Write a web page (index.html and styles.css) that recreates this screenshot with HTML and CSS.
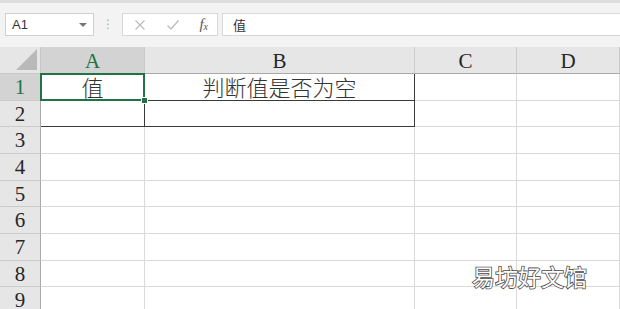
FILE: index.html
```html
<!DOCTYPE html>
<html lang="zh-CN">
<head>
  <meta charset="UTF-8">
  <title>判断值是否为空</title>
  <link rel="stylesheet" href="styles.css">
</head>
<body>
  <div class="excel">
    <div class="toolbar">
      <div class="name-box">
        <span>A1</span>
        <span class="caret"></span>
      </div>
      <div class="grip">⋮</div>
      <div class="fx-buttons">
        <svg class="fx-icon" viewBox="0 0 12 12" width="12" height="12">
          <path d="M1.5 1.5l9 9M10.5 1.5l-9 9" stroke="#bdbdbd" stroke-width="1.2" fill="none"/>
        </svg>
        <svg class="fx-icon" viewBox="0 0 14 12" width="14" height="12">
          <path d="M1.5 6.5l3.5 3.5 7.5-8.5" stroke="#bdbdbd" stroke-width="1.4" fill="none"/>
        </svg>
        <span class="fx-text">f<sub>x</sub></span>
      </div>
      <div class="formula-input">值</div>
    </div>

    <div class="sheet">
      <div class="corner"><span class="corner-tri"></span></div>
      <div class="col-head active">A</div>
      <div class="col-head">B</div>
      <div class="col-head">C</div>
      <div class="col-head">D</div>

      <div class="row-head active">1</div>
      <div class="cell b-right b-bottom selected">值</div>
      <div class="cell b-right b-bottom">判断值是否为空</div>
      <div class="cell"></div>
      <div class="cell"></div>

      <div class="row-head">2</div>
      <div class="cell b-right b-bottom"></div>
      <div class="cell b-right b-bottom"></div>
      <div class="cell"></div>
      <div class="cell"></div>

      <div class="row-head">3</div>
      <div class="cell"></div><div class="cell"></div><div class="cell"></div><div class="cell"></div>
      <div class="row-head">4</div>
      <div class="cell"></div><div class="cell"></div><div class="cell"></div><div class="cell"></div>
      <div class="row-head">5</div>
      <div class="cell"></div><div class="cell"></div><div class="cell"></div><div class="cell"></div>
      <div class="row-head">6</div>
      <div class="cell"></div><div class="cell"></div><div class="cell"></div><div class="cell"></div>
      <div class="row-head">7</div>
      <div class="cell"></div><div class="cell"></div><div class="cell"></div><div class="cell"></div>
      <div class="row-head">8</div>
      <div class="cell"></div><div class="cell"></div><div class="cell"></div><div class="cell"></div>
      <div class="row-head">9</div>
      <div class="cell"></div><div class="cell"></div><div class="cell"></div><div class="cell"></div>
    </div>

    <div class="watermark">易坊好文馆</div>
  </div>
</body>
</html>
```

FILE: styles.css
```css
body, html {
  margin: 0;
  padding: 0;
  width: 100%;
  height: 100%;
  overflow: hidden;
  background-color: #ffffff;
}

.excel {
  position: relative;
  width: 620px;
  height: 309px;
  overflow: hidden;
  font-family: "Liberation Serif", "Noto Sans CJK SC", serif;
}

/* formula bar */
.toolbar {
  height: 47px;
  box-sizing: border-box;
  background-color: #f3f3f3;
  border-top: 3px solid #dedede;
  display: flex;
  align-items: flex-start;
  padding: 10px 0 0 5px;
}

.name-box {
  width: 89px;
  height: 23px;
  box-sizing: border-box;
  background: #ffffff;
  border: 1px solid #d0d0d0;
  display: flex;
  align-items: center;
  justify-content: space-between;
  padding: 0 6px 0 6px;
  font-family: "Liberation Sans", Arial, sans-serif;
  font-size: 13px;
  color: #333;
}

.caret {
  width: 0;
  height: 0;
  border-left: 4px solid transparent;
  border-right: 4px solid transparent;
  border-top: 4px solid #777;
}

.grip {
  width: 28px;
  text-align: center;
  color: #aaa;
  font-family: "DejaVu Sans", sans-serif;
  font-size: 12px;
  line-height: 23px;
}

.fx-buttons {
  width: 96px;
  height: 23px;
  box-sizing: border-box;
  background: #ffffff;
  border: 1px solid #d8d8d8;
  display: flex;
  align-items: center;
  justify-content: space-between;
  padding: 0 9px 0 11px;
}

.fx-text {
  font-family: "Liberation Serif", serif;
  font-style: italic;
  font-size: 15px;
  color: #555;
  line-height: 1;
}

.fx-text sub {
  font-size: 10px;
  vertical-align: -1px;
}

.formula-input {
  flex: 1;
  height: 23px;
  box-sizing: border-box;
  margin-left: 4px;
  background: #ffffff;
  border: 1px solid #d8d8d8;
  border-right: none;
  padding-left: 10px;
  font-family: "Noto Sans CJK SC", sans-serif;
  font-size: 13px;
  line-height: 21px;
  color: #333;
}

/* grid */
.sheet {
  display: grid;
  grid-template-columns: 41px 104px 270px 102px 103px;
  grid-template-rows: 27px repeat(9, 26.667px);
}

.corner, .col-head, .row-head, .cell {
  box-sizing: border-box;
}

.corner {
  position: relative;
  background: #e6e6e6;
  border-right: 1px solid #c8c8c8;
  border-bottom: 1px solid #c8c8c8;
}

.corner-tri {
  position: absolute;
  right: 3px;
  bottom: 3px;
  width: 0;
  height: 0;
  border-left: 21px solid transparent;
  border-bottom: 21px solid #b9b9b9;
}

.col-head {
  background: #e6e6e6;
  border-right: 1px solid #cbcbcb;
  border-bottom: 1px solid #a9a9a9;
  padding-top: 2px;
  text-align: center;
  font-size: 21px;
  line-height: 24px;
  color: #262626;
}

.row-head {
  background: #e6e6e6;
  border-right: 1px solid #a9a9a9;
  border-bottom: 1px solid #cbcbcb;
  text-align: center;
  font-size: 21px;
  line-height: 26px;
  color: #262626;
}

.col-head.active, .row-head.active {
  background: #d3d3d3;
  color: #217346;
}

.cell {
  border-right: 1px solid #dadada;
  border-bottom: 1px solid #dadada;
  text-align: center;
  font-family: "Noto Sans CJK SC", sans-serif;
  font-weight: 300;
  font-size: 22px;
  line-height: 25px;
  color: #333;
}

.cell.b-right {
  border-right-color: #3a3a3a;
}

.cell.b-bottom {
  border-bottom-color: #3a3a3a;
}

.cell.selected {
  position: relative;
}

.cell.selected::after {
  content: '';
  position: absolute;
  left: -1px;
  top: -1px;
  right: -1px;
  bottom: -1px;
  border: 2px solid #217346;
}

.cell.selected::before {
  content: '';
  position: absolute;
  right: -4px;
  bottom: -4px;
  width: 5px;
  height: 5px;
  background: #217346;
  border: 1px solid #ffffff;
  z-index: 2;
}

.watermark {
  position: absolute;
  left: 472px;
  top: 259px;
  font-family: "Noto Sans CJK SC", sans-serif;
  font-size: 23px;
  color: #ffffff;
  -webkit-text-stroke: 1.6px #4a4a4a;
  paint-order: stroke fill;
}
```
